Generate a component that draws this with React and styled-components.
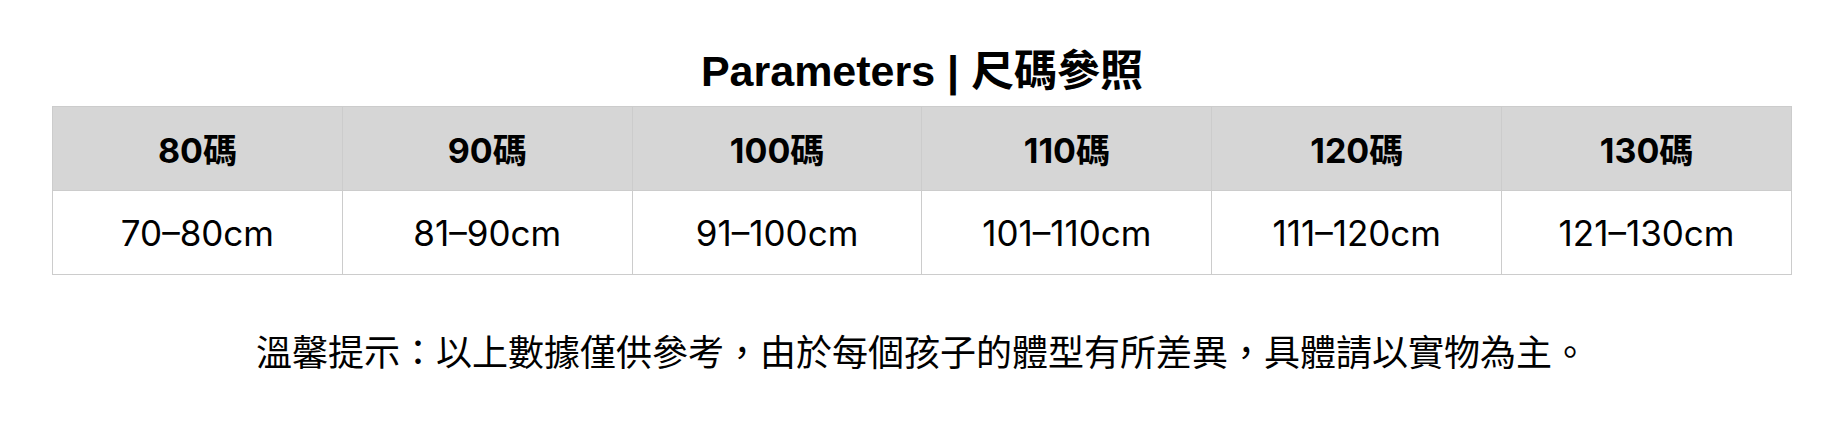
import React from 'react'
import styled, { createGlobalStyle } from 'styled-components'

const sizes = [
    { label: '80碼', range: '70–80cm' },
    { label: '90碼', range: '81–90cm' },
    { label: '100碼', range: '91–100cm' },
    { label: '110碼', range: '101–110cm' },
    { label: '120碼', range: '111–120cm' },
    { label: '130碼', range: '121–130cm' },
]

const App = () => {
    return (
        <Wrapper>
            <GlobalStyle />
            <Title>Parameters | 尺碼參照</Title>
            <SizeTable>
                <thead>
                    <tr>
                        {sizes.map(s => <HeadCell key={s.label}>{s.label}</HeadCell>)}
                    </tr>
                </thead>
                <tbody>
                    <tr>
                        {sizes.map(s => <Cell key={s.label}>{s.range}</Cell>)}
                    </tr>
                </tbody>
            </SizeTable>
            <Note>溫馨提示：以上數據僅供參考，由於每個孩子的體型有所差異，具體請以實物為主。</Note>
        </Wrapper>
    )
}

const GlobalStyle = createGlobalStyle`
    html, body {
        margin: 0;
        padding: 0;
        background: #fff;
    }
`

const Wrapper = styled.section`
    width: 1844px;
    height: 436px;
    box-sizing: border-box;
    padding: 45px 52px 0;
    display: flex;
    flex-direction: column;
    align-items: center;
    color: #000;
    font-family: Inter, "Noto Sans CJK TC", sans-serif;
`

const Title = styled.h1`
    margin: 0 0 9px;
    height: 52px;
    line-height: 52px;
    font-size: 43px;
    font-weight: 700;
    font-family: "Liberation Sans", "Noto Sans CJK TC", sans-serif;
`

const SizeTable = styled.table`
    width: 1740px;
    border-collapse: collapse;
    table-layout: fixed;
`

const HeadCell = styled.th`
    height: 83px;
    padding: 0;
    background: #d6d6d6;
    border: 1px solid #cccccc;
    font-size: 34px;
    font-weight: 700;
    text-align: center;
    vertical-align: middle;
`

const Cell = styled.td`
    height: 83px;
    padding: 0;
    background: #fff;
    border: 1px solid #cccccc;
    font-size: 35px;
    font-weight: 400;
    text-align: center;
    vertical-align: middle;
`

const Note = styled.p`
    margin: 54px 0 0;
    line-height: 43px;
    font-size: 36px;
    font-weight: 400;
    font-family: "Noto Sans CJK TC", sans-serif;
`

export default App
